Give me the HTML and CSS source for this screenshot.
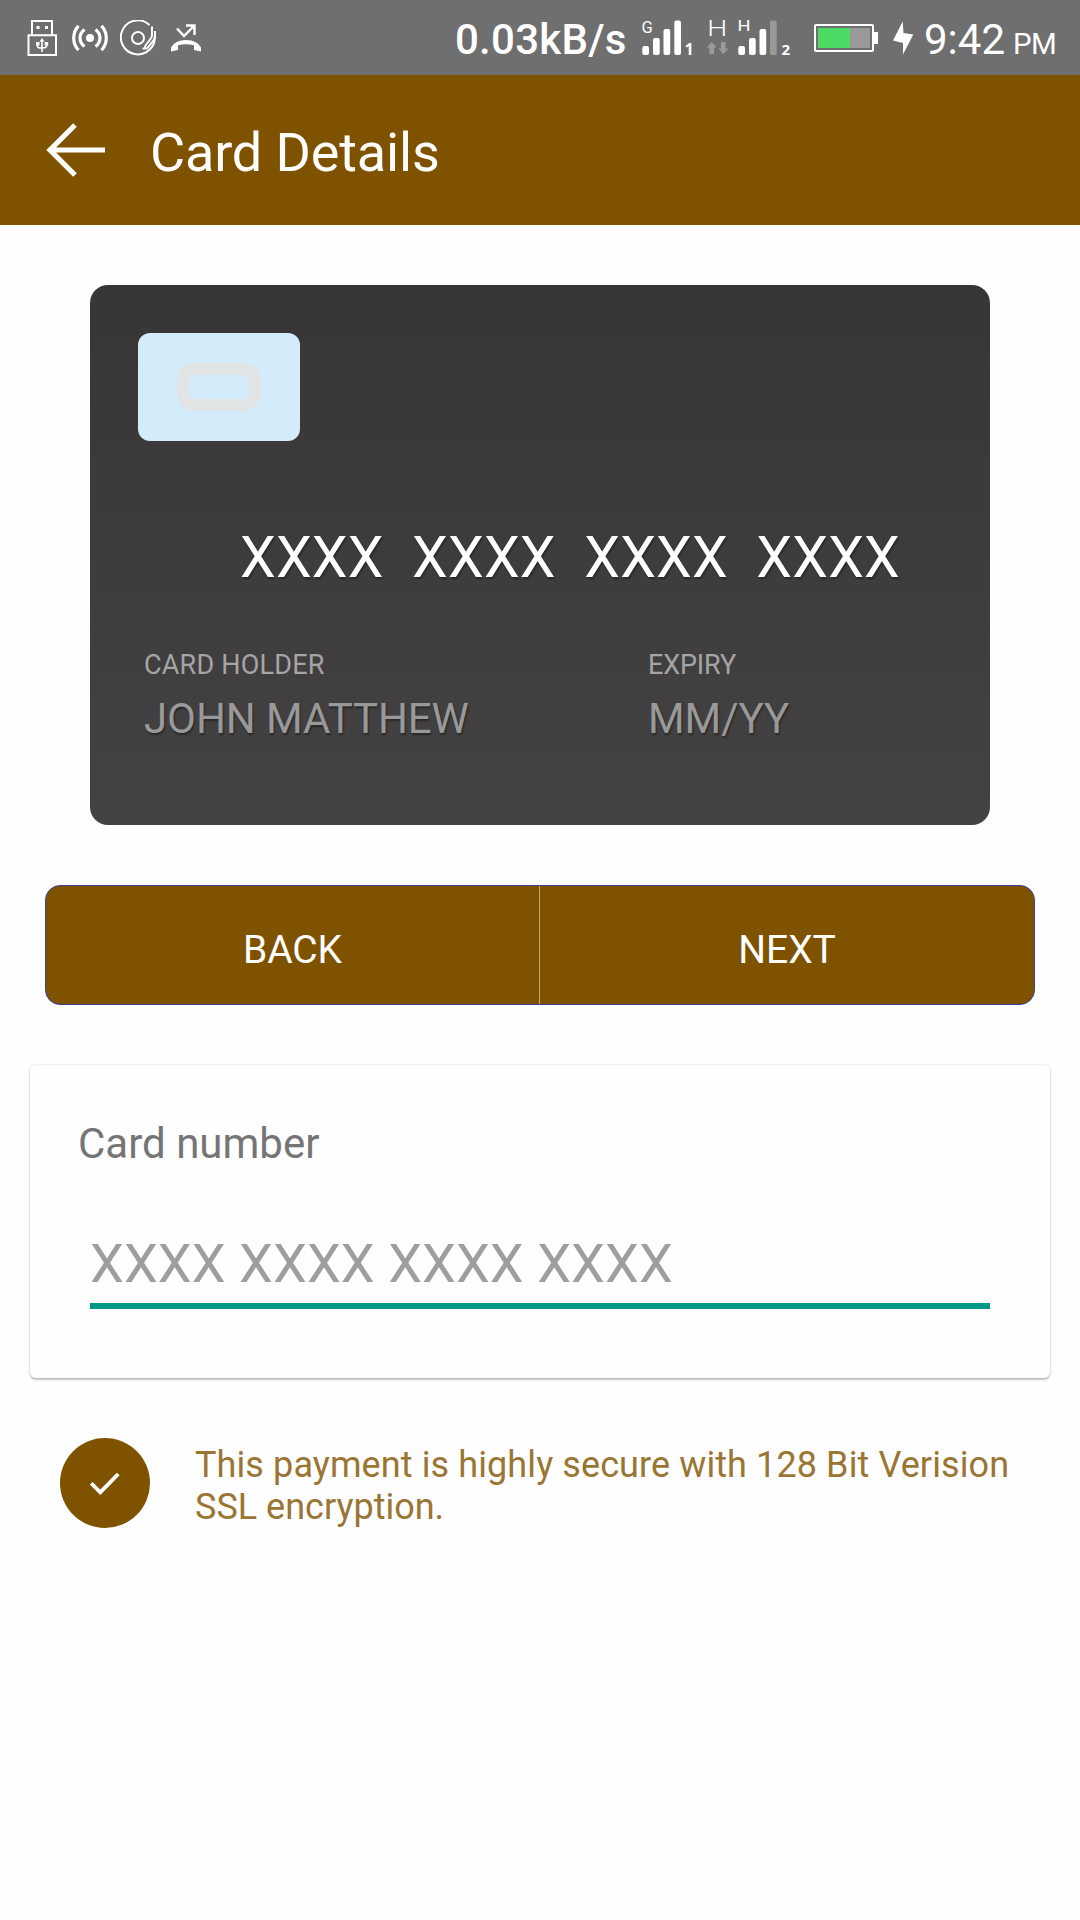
FILE: index.html
```html
<!DOCTYPE html>
<html lang="en">
<head>
<meta charset="utf-8">
<title>Card Details</title>
<link rel="stylesheet" href="styles.css">
</head>
<body>
<header class="status">
  <div class="status-left">
    <svg class="ico-usb" width="30" height="36" viewBox="27 20 30 36" fill="none" stroke="#fff">
      <path d="M32 35V21H52V35M28.500 35.200H56V55H28.500Z" stroke-width="2"/>
      <path d="M36.500 26h3v3h-3zM45 26h3v3h-3z" fill="#fff" stroke="none"/>
      <path d="M42 40V52M37.500 43V46.500Q37.500 48 42 48M46.700 43V45.500Q46.700 48 42 48" stroke-width="1.600"/>
      <path d="M42 38L44.500 41.500H39.500ZM36 42h3.500v3.500h-3.500zM44.700 42h3.500v3.500h-3.500z" fill="#fff" stroke="none"/>
    </svg>
    <svg class="ico-cast" width="36" height="36" viewBox="72 20 36 36" fill="none" stroke="#fff" stroke-width="3.200">
      <circle cx="90" cy="38" r="4" fill="#fff" stroke="none"/>
      <path d="M84.500 29.500Q80 33 80 38T84.500 46.500M95.500 29.500Q100 33 100 38T95.500 46.500M78.500 25.800Q73.700 31 73.700 38T78.500 50.200M101.500 25.800Q106.300 31 106.300 38T101.500 50.200"/>
    </svg>
    <svg class="ico-disc" width="36" height="36" viewBox="120 20 36 36" fill="none" stroke="#fff" stroke-width="2">
      <path d="M149.500 25A17 17 0 1 0 154.800 36"/>
      <circle cx="138" cy="38" r="6"/>
      <path d="M152 26.500V35Q152 37 150.500 39L145.200 46V48M155 31V36Q155 38.500 153 41L147 48.500H142.500"/>
    </svg>
    <svg class="ico-call" width="30" height="30" viewBox="171 22 30 30">
      <path d="M177 27.500L184 35L194 25M186 24.500H194.500V34" fill="none" stroke="#fff" stroke-width="2.400"/>
      <path d="M171 50.500V46.500Q175 39 186 39T201 46.500V50.500L194 49V44.300Q186 42 178 44.300V49Z" fill="#fff"/>
    </svg>
  </div>
  <div class="status-right">
    <span class="speed">0.03kB/s</span>
    <svg class="sig1" width="60" height="50" viewBox="640 13 60 50" fill="#fff">
      <text class="net" x="641.500" y="32.800" font-size="16.500">G</text>
      <rect x="642.300" y="46" width="6.700" height="9" rx="2"/>
      <rect x="653" y="38" width="6.700" height="17" rx="2"/>
      <rect x="663.500" y="29" width="6.700" height="26" rx="2"/>
      <rect x="674.300" y="20.500" width="6.700" height="34.500" rx="2"/>
      <text class="slot" x="684.800" y="55" font-size="15.500">1</text>
    </svg>
    <svg class="data" width="30" height="56" viewBox="702 10 30 56">
      <text class="net thin" x="707.300" y="36" font-size="22.500" textLength="20" lengthAdjust="spacingAndGlyphs" fill="#fff">H</text>
      <path d="M711.700 42L716.700 47.500H714V54H709.500V47.500H706.700ZM723.300 54L718.300 48.500H721V42H725.500V48.500H728.500Z" fill="#9a9a9a"/>
    </svg>
    <svg class="sig2" width="60" height="50" viewBox="735 13 60 50" fill="#fff">
      <text class="net" x="737.500" y="31" font-size="15" textLength="13" lengthAdjust="spacingAndGlyphs">H</text>
      <rect x="738.300" y="46" width="6.700" height="9" rx="2"/>
      <rect x="749" y="38" width="6.700" height="17" rx="2"/>
      <rect x="759.500" y="29" width="6.700" height="26" rx="2"/>
      <rect x="770" y="20.500" width="6.700" height="34.500" rx="2" fill="#999"/>
      <text class="slot" x="781.500" y="55" font-size="15">2</text>
    </svg>
    <svg class="battery" width="64" height="28" viewBox="814 23 64 28">
      <rect x="815" y="24" width="58" height="26" rx="1" fill="none" stroke="#fff" stroke-width="2"/>
      <path d="M818 27H850V47H818Z" fill="#4cd964"/>
      <path d="M850 27H870V47H850Z" fill="#999"/>
      <path d="M874 31H878V43H874Z" fill="#fff"/>
    </svg>
    <svg class="bolt" width="21" height="34" viewBox="893 20 21 34">
      <path d="M902.700 20.500L893 39.500L903 42V53.500L913.300 33.500L903.500 32Z" fill="#fff"/>
    </svg>
    <span class="time">9:42</span>
    <span class="ampm">PM</span>
  </div>
</header>

<div class="appbar">
  <svg class="back-arrow" width="60" height="56" viewBox="46 122 60 56" fill="none" stroke="#fff" stroke-width="5.200">
    <path d="M75 125L50 150L75 175M50 150H105"/>
  </svg>
  <h1 class="title">Card Details</h1>
</div>

<main class="content">
  <section class="card">
    <div class="chip"><div class="chip-ring"></div></div>
    <div class="card-number">XXXX&nbsp; XXXX&nbsp; XXXX&nbsp; XXXX</div>
    <div class="card-info">
      <div class="holder">
        <div class="label">CARD HOLDER</div>
        <div class="value">JOHN MATTHEW</div>
      </div>
      <div class="expiry">
        <div class="label">EXPIRY</div>
        <div class="value">MM/YY</div>
      </div>
    </div>
  </section>

  <nav class="buttons">
    <div class="btn btn-back">BACK</div>
    <div class="btn">NEXT</div>
  </nav>

  <section class="panel">
    <div class="field-label">Card number</div>
    <div class="field">XXXX XXXX XXXX XXXX</div>
  </section>

  <section class="secure">
    <div class="badge">
      <svg width="30" height="24" viewBox="90 1472 30 24" fill="none" stroke="#fff" stroke-width="3.900">
        <path d="M91.200 1484.300L100.300 1493.300L118.200 1475"/>
      </svg>
    </div>
    <p class="secure-text"><span class="secure-lead">This payment is highly secure with 128 Bit Verision</span> SSL encryption.</p>
  </section>
</main>
</body>
</html>
```
FILE: styles.css
```css
* { box-sizing: border-box; }
body {
  margin: 0;
  min-height: 1920px;
  background: #fefefe;
  font-family: Roboto, "Liberation Sans", sans-serif;
}
svg { display: block; flex: none; }

.status {
  display: flex;
  justify-content: space-between;
  height: 75px;
  padding: 0 25px 0 27px;
  background: #6f6f6f;
  color: #fff;
}
.status-left, .status-right { display: flex; align-items: center; }
.ico-cast { margin-left: 15px; }
.ico-disc { margin-left: 12px; }
.ico-call { margin-left: 15px; }
.status-right { white-space: nowrap; }
.speed {
  width: 185px;
  padding-top: 4px;
  font-size: 42px;
  font-weight: 500;
  letter-spacing: 0.25px;
  line-height: 50px;
}
.net { font-family: Roboto, sans-serif; }
.thin { font-weight: 300; }
.slot { font-family: "Noto Sans", sans-serif; font-weight: 700; }
.data { margin-left: 2px; }
.sig2 { margin-left: 3px; }
.battery { margin-left: 19px; }
.bolt { margin-left: 15px; }
.time { width: 89px; margin-left: 10px; padding-top: 4px; font-size: 42px; line-height: 50px; }
.ampm {
  width: 42px;
  padding-top: 12px;
  font-size: 29.5px;
  letter-spacing: -0.5px;
  line-height: 36px;
}

.appbar {
  display: flex;
  align-items: center;
  height: 150px;
  padding-left: 46px;
  background: #7f5200;
  color: #fff;
}
.title {
  margin: 0 0 0 44px;
  padding-top: 5px;
  font-size: 54px;
  font-weight: 400;
  letter-spacing: -0.15px;
  line-height: 64px;
}

.content { display: flex; flex-direction: column; padding: 60px 30px 0; }

.card {
  height: 540px;
  margin: 0 60px;
  padding: 48px 48px 0;
  border-radius: 18px;
  background: linear-gradient(#373536, #444243);
}
.chip {
  display: grid;
  place-items: center;
  width: 162px;
  height: 108px;
  border-radius: 12px;
  background: #d4ecfa;
}
.chip-ring {
  width: 84px;
  height: 48px;
  border: 12px solid #e0e4e5;
  border-radius: 18px;
}
.card-number {
  margin: 83px 0 0 102px;
  color: #fff;
  font-size: 57px;
  letter-spacing: 0.15px;
  line-height: 67px;
  white-space: nowrap;
  text-shadow: 1px 2px 2px rgba(0, 0, 0, 0.35);
}
.card-info { display: flex; margin-top: 58px; padding-left: 6px; }
.holder { width: 504px; }
.label { color: #a5a5a5; font-size: 27px; line-height: 32px; }
.holder .label { letter-spacing: 0.2px; }
.expiry .label { letter-spacing: -0.15px; }
.value {
  margin-top: 13px;
  color: #999;
  font-size: 42px;
  letter-spacing: -0.08px;
  line-height: 50px;
  text-shadow: 1px 2px 2px rgba(0, 0, 0, 0.4);
}

.buttons {
  display: flex;
  height: 120px;
  margin: 60px 15px 0;
  border: 1px solid #3f3f9f;
  border-radius: 15px;
  background: #7f5200;
  color: #fff;
}
.btn {
  flex: 1;
  padding-top: 41px;
  font-size: 39px;
  line-height: 46px;
  text-align: center;
}
.btn-back { flex: 0 0 494px; border-right: 1px solid #c4a878; letter-spacing: -0.1px; }

.panel {
  height: 313px;
  margin-top: 60px;
  padding: 54px 48px 0;
  border-radius: 6px;
  background: #fefefe;
  box-shadow: 0 0 1px 1px rgba(0, 0, 0, 0.06), 0 2px 2px rgba(0, 0, 0, 0.22);
}
.field-label { color: #757575; font-size: 42px; line-height: 50px; }
.field {
  margin: 62px 12px 0;
  padding-bottom: 7px;
  padding-top: 1px;
  border-bottom: 6px solid #009688;
  color: #9e9e9e;
  font-size: 54px;
  letter-spacing: 0.05px;
  line-height: 64px;
}

.secure { display: flex; align-items: center; margin-top: 60px; padding: 0 30px; }
.badge {
  display: grid;
  place-items: center;
  flex: none;
  width: 90px;
  height: 90px;
  border-radius: 50%;
  background: #7f5200;
}
.secure-text {
  margin: 0 0 0 45px;
  padding-top: 6px;
  color: #9a7533;
  font-size: 36px;
  line-height: 42px;
}
.secure-lead { letter-spacing: 0.1px; }
```
